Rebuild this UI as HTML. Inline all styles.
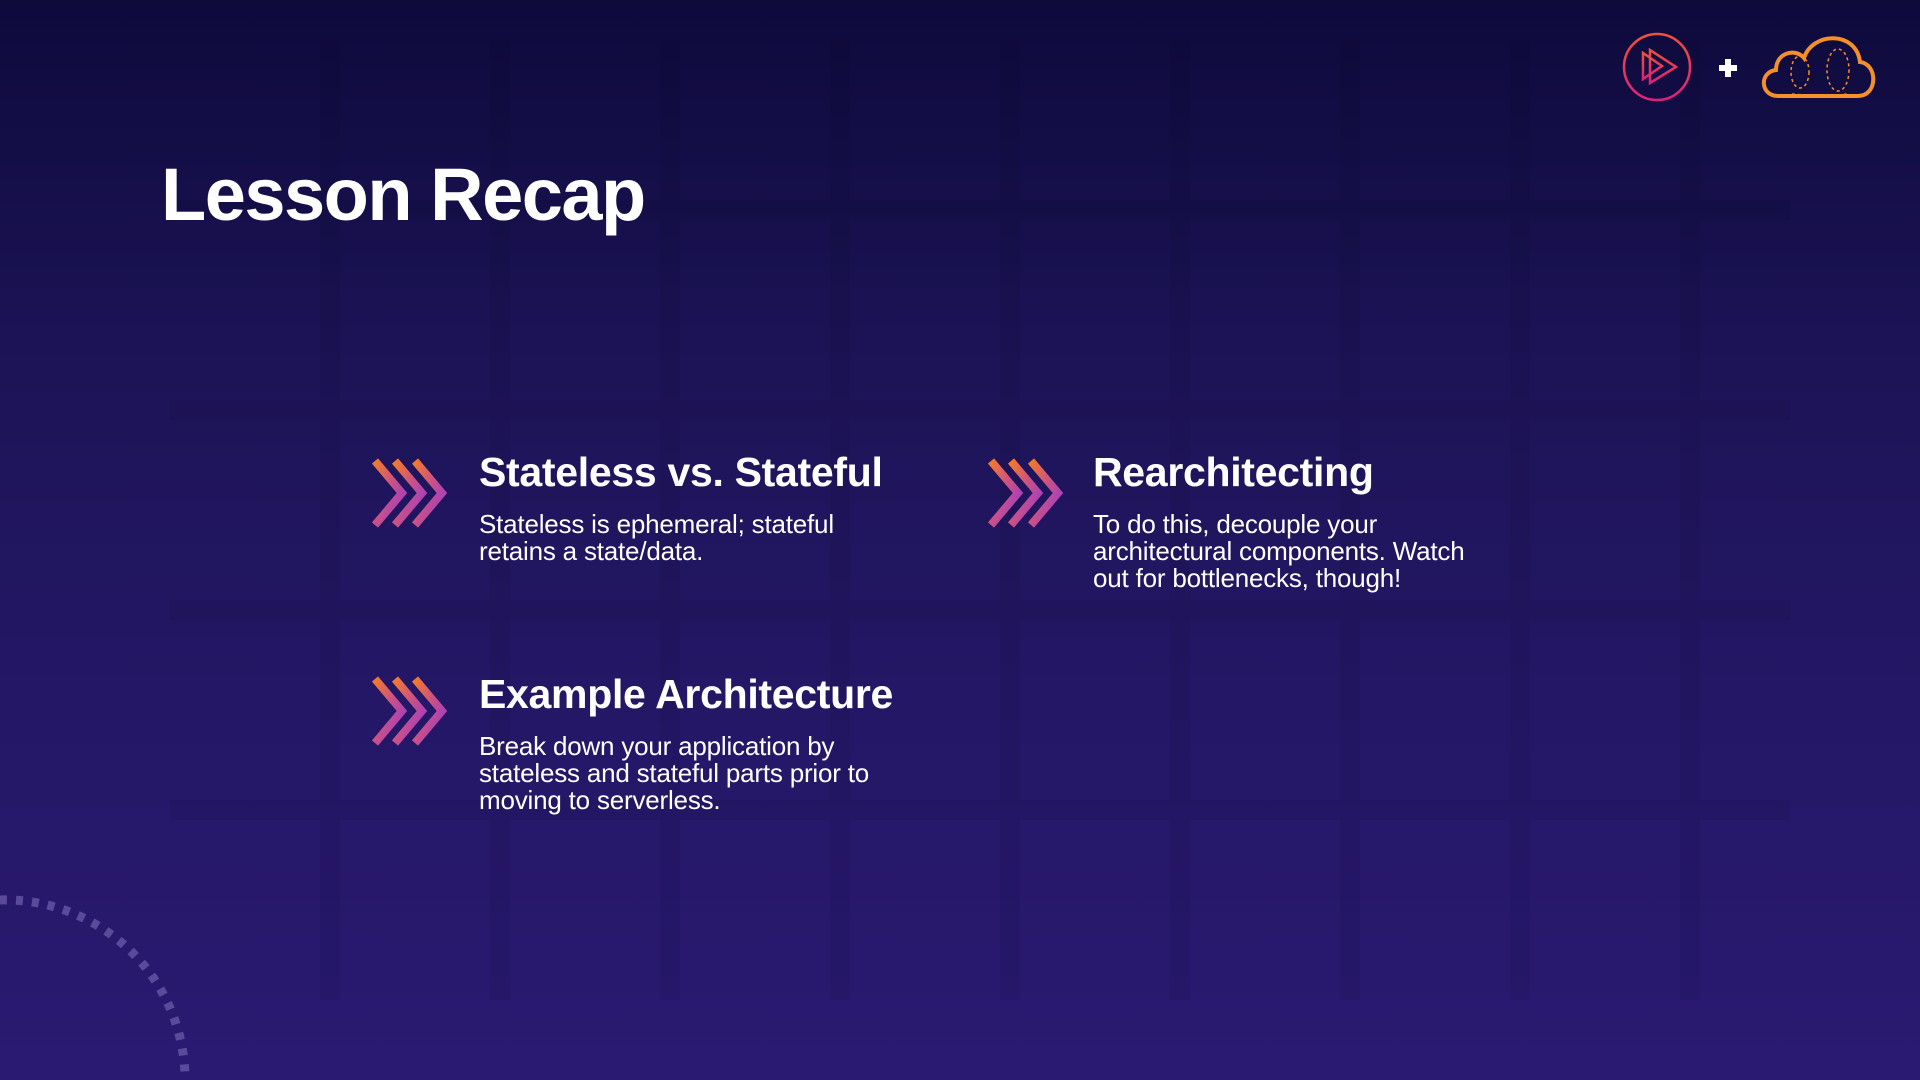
<!DOCTYPE html>
<html><head><meta charset="utf-8"><style>
html,body{margin:0;padding:0}
body{width:1920px;height:1080px;overflow:hidden;position:relative;font-family:"Liberation Sans",sans-serif;color:#fff;
background:linear-gradient(180deg,#0e0a3c 0%,#1d1458 35%,#241766 65%,#2a1a72 100%);}
.grid{position:absolute;left:170px;top:40px;width:1620px;height:960px;opacity:.05;
background-image:repeating-linear-gradient(90deg,transparent 0 150px,#000 150px 170px),repeating-linear-gradient(0deg,transparent 0 180px,#000 180px 200px);}
.t{position:absolute;margin:0;white-space:nowrap}
h1.t{left:161px;top:152px;font-size:74px;font-weight:700;letter-spacing:-1.5px}
h2.t{font-size:41px;font-weight:700;letter-spacing:-0.3px}
p.t{font-size:26px;line-height:27px;letter-spacing:-0.2px}
svg.c{position:absolute}
</style></head><body>
<div class="grid"></div>
<svg style="position:absolute;left:0;top:880px" width="220" height="200"><path d="M0 20 A180 180 0 0 1 185 200" fill="none" stroke="#5a4a9a" stroke-width="9" stroke-dasharray="7 9"/></svg>

<svg style="position:absolute;left:1620px;top:26px" width="280" height="90">
<defs><linearGradient id="pg" x1="0" y1="0" x2="0" y2="1"><stop offset="0" stop-color="#f0513a"/><stop offset="1" stop-color="#e0207a"/></linearGradient></defs>
<circle cx="37" cy="41" r="33" fill="none" stroke="url(#pg)" stroke-width="2.5"/>
<path d="M23 27 L23 53 L42 40 Z" fill="none" stroke="url(#pg)" stroke-width="2.5"/>
<path d="M30 24 L30 57 L56 41 Z" fill="none" stroke="url(#pg)" stroke-width="2.5"/>
<path d="M99 39 h6 v-6 h6 v6 h6 v6 h-6 v6 h-6 v-6 h-6z" fill="#fff"/>
<path d="M158 70 C140 70 139 46 156 44 C156 26 176 22 184 32 C192 6 236 4 240 36 C258 38 258 70 238 70 Z" fill="none" stroke="#f4902a" stroke-width="4"/>
<g fill="none" stroke="#f4902a" stroke-width="1.5" stroke-dasharray="3 3"><ellipse cx="180" cy="46" rx="9" ry="16"/><ellipse cx="218" cy="44" rx="11" ry="21"/><path d="M172 68 L196 70 M206 70 L228 68"/></g>
</svg>

<h1 class="t">Lesson Recap</h1>

<svg width="0" height="0" style="position:absolute"><defs><linearGradient id="cg" x1="0" y1="0" x2="1" y2="1"><stop offset="0" stop-color="#f47a2a"/><stop offset=".5" stop-color="#c8508a"/><stop offset="1" stop-color="#9a3ad0"/></linearGradient>
<symbol id="chev" viewBox="0 0 80 70"><g fill="none" stroke="url(#cg)" stroke-width="8"><path d="M3 3 L30 35 L3 67"/><path d="M23 3 L50 35 L23 67"/><path d="M43 3 L70 35 L43 67"/></g></symbol></defs></svg>

<svg class="c" style="left:372px;top:458px" width="80" height="70"><use href="#chev"/></svg>
<h2 class="t" style="left:479px;top:449px">Stateless vs. Stateful</h2>
<p class="t" style="left:479px;top:511px">Stateless is ephemeral; stateful<br>retains a state/data.</p>

<svg class="c" style="left:988px;top:458px" width="80" height="70"><use href="#chev"/></svg>
<h2 class="t" style="left:1093px;top:449px">Rearchitecting</h2>
<p class="t" style="left:1093px;top:511px">To do this, decouple your<br>architectural components. Watch<br>out for bottlenecks, though!</p>

<svg class="c" style="left:372px;top:676px" width="80" height="70"><use href="#chev"/></svg>
<h2 class="t" style="left:479px;top:671px">Example Architecture</h2>
<p class="t" style="left:479px;top:733px">Break down your application by<br>stateless and stateful parts prior to<br>moving to serverless.</p>
</body></html>
